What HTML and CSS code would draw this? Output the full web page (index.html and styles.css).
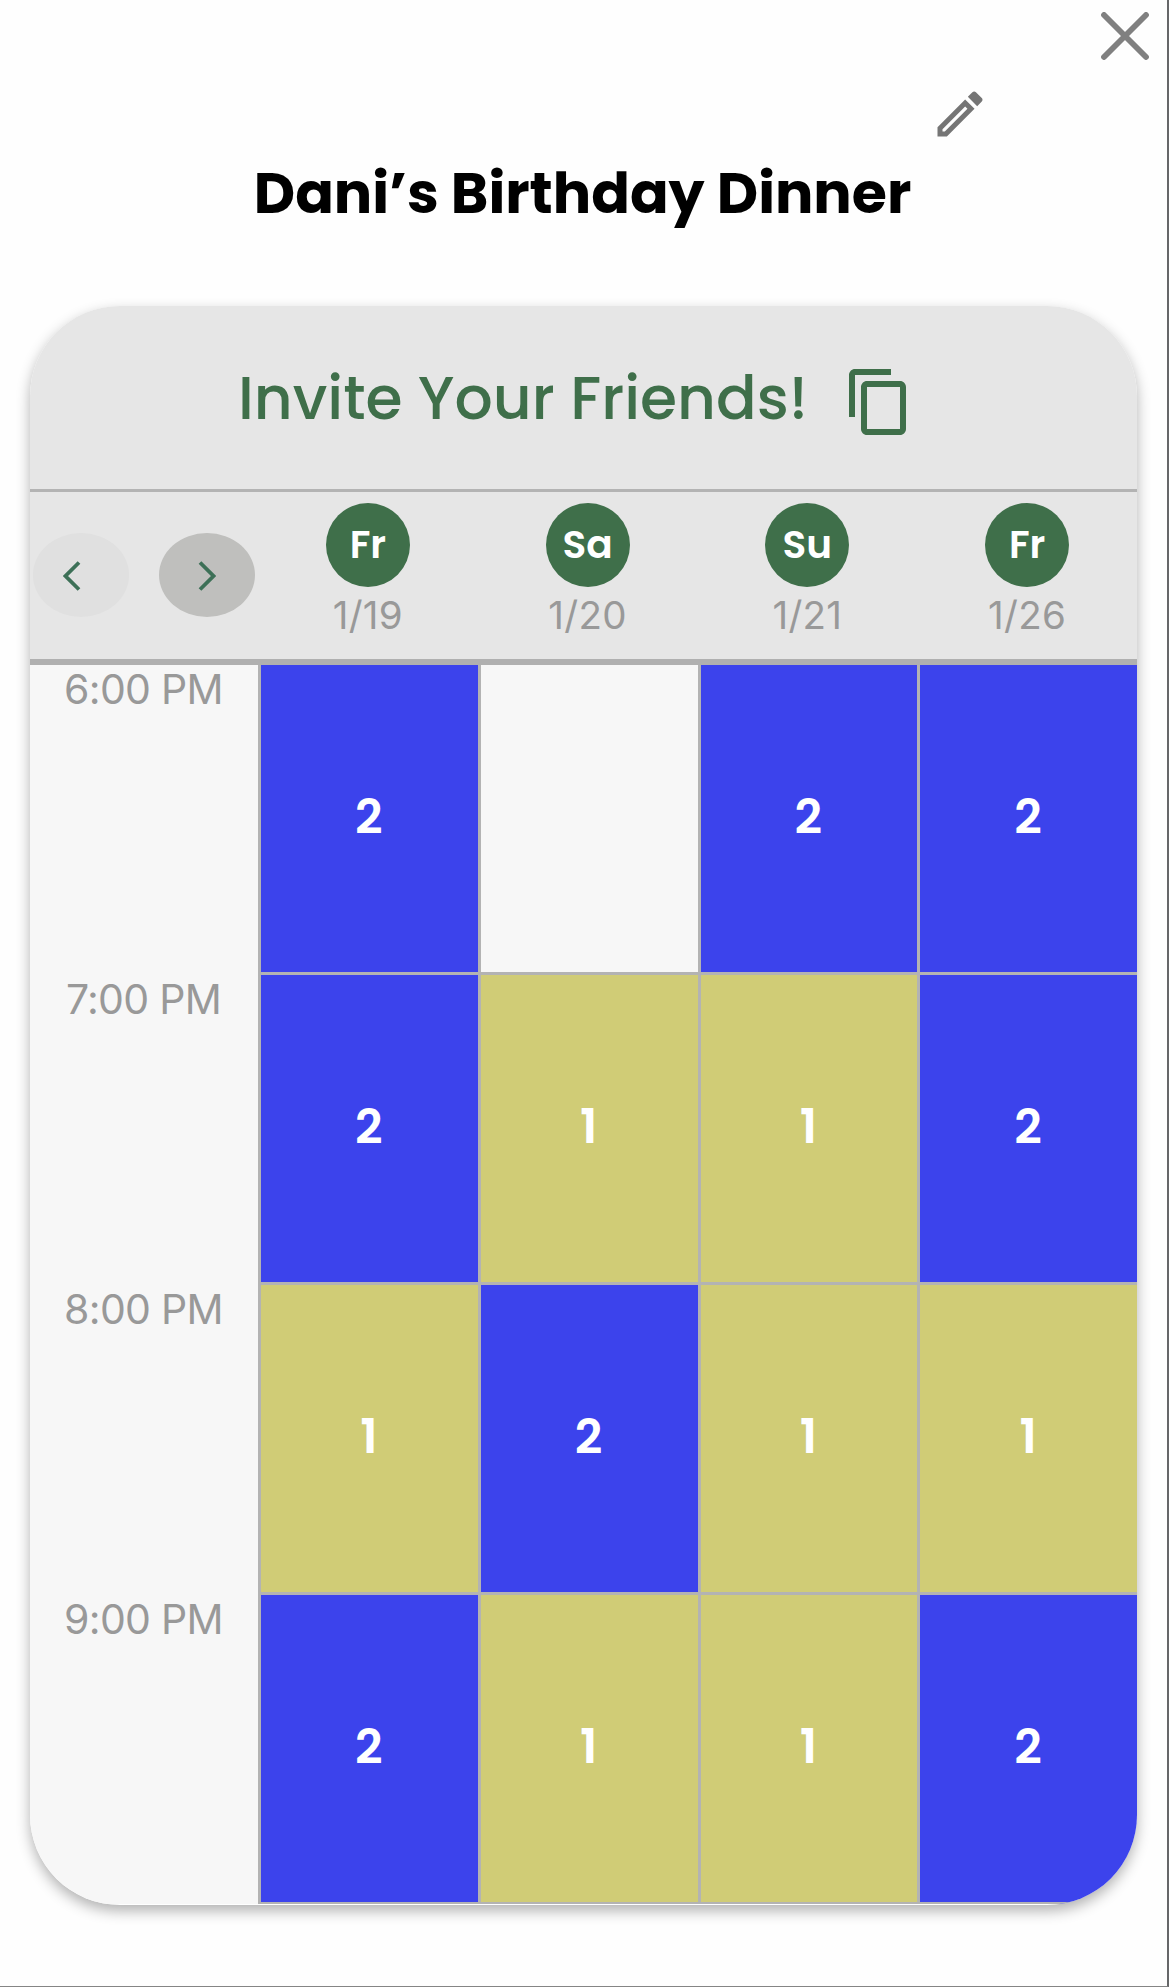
FILE: index.html
```html
<!DOCTYPE html>
<html lang="en">
<head>
<meta charset="utf-8">
<title>Dani’s Birthday Dinner</title>
<link rel="stylesheet" href="styles.css">
</head>
<body>
<main class="page">
  <div class="toolbar">
    <button class="icon-button close" aria-label="Close">
      <svg width="48" height="48" viewBox="0 0 48 48"><path d="M3 3L45 45M45 3L3 45" fill="none" stroke="#808080" stroke-width="5.8" stroke-linecap="round"/></svg>
    </button>
  </div>
  <div class="edit-row">
    <button class="icon-button" aria-label="Edit">
      <svg width="60" height="60" viewBox="0 0 24 24" fill="#757575"><path d="M14.06 9.02l.92.92L5.92 19H5v-.92l9.06-9.06M17.66 3c-.25 0-.51.1-.7.29l-1.83 1.83 3.75 3.75 1.83-1.83c.39-.39.39-1.02 0-1.41l-2.34-2.34c-.2-.2-.45-.29-.71-.29zm-3.6 3.19L3 17.25V21h3.75L17.81 9.94l-3.75-3.75z"/></svg>
    </button>
  </div>
  <h1 class="title">Dani’s Birthday Dinner</h1>

  <section class="card">
    <div class="invite">
      <span class="invite-text">Invite Your Friends!</span>
      <svg class="copy" width="72" height="72" viewBox="0 0 24 24" fill="#3f6f4a"><path d="M16 1H4c-1.1 0-2 .9-2 2v14h2V3h12V1zm3 4H8c-1.1 0-2 .9-2 2v14c0 1.1.9 2 2 2h11c1.1 0 2-.9 2-2V7c0-1.1-.9-2-2-2zm0 16H8V7h11v14z"/></svg>
    </div>
    <header class="days">
      <nav class="pager">
        <button class="page-button disabled" aria-label="Previous days"><svg class="prev" width="18" height="30" viewBox="0 0 18 30"><path d="M16 1.5L2.5 15L16 28.5"/></svg></button>
        <button class="page-button" aria-label="Next days"><svg class="next" width="18" height="30" viewBox="0 0 18 30"><path d="M2 1.5L15.5 15L2 28.5"/></svg></button>
      </nav>
      <div class="day"><span class="badge">Fr</span><span class="date">1/19</span></div>
      <div class="day"><span class="badge">Sa</span><span class="date">1/20</span></div>
      <div class="day"><span class="badge">Su</span><span class="date">1/21</span></div>
      <div class="day"><span class="badge">Fr</span><span class="date">1/26</span></div>
    </header>
    <div class="slots">
      <div class="time">6:00 PM</div><div class="slot two">2</div><div class="slot"></div><div class="slot two">2</div><div class="slot two">2</div>
      <div class="time">7:00 PM</div><div class="slot two">2</div><div class="slot one">1</div><div class="slot one">1</div><div class="slot two">2</div>
      <div class="time">8:00 PM</div><div class="slot one">1</div><div class="slot two">2</div><div class="slot one">1</div><div class="slot one">1</div>
      <div class="time">9:00 PM</div><div class="slot two">2</div><div class="slot one">1</div><div class="slot one">1</div><div class="slot two">2</div>
    </div>
  </section>
</main>
</body>
</html>
```
FILE: styles.css
```css
* { box-sizing: border-box; }
body { margin: 0; background: #fff; font-family: Poppins, Inter, "Liberation Sans", sans-serif; }
button { border: 0; padding: 0; background: none; font: inherit; }
svg { display: block; }
.page {
  width: 1169px;
  height: 1987px;
  background: #fefefe;
  border-right: 2px solid #666769;
  border-bottom: 1px solid #858585;
}
.toolbar { display: flex; justify-content: flex-end; height: 83px; padding: 12px 18px 0 0; }
.close { height: 48px; }
.edit-row { display: flex; padding-left: 930px; height: 62px; }
.title {
  margin: 0;
  height: 161px;
  padding: 13px 2px 0 0;
  font-size: 57px;
  line-height: 70px;
  font-weight: 700;
  text-align: center;
  white-space: nowrap;
}
.card {
  width: 1107px;
  height: 1599px;
  margin-left: 30px;
  overflow: hidden;
  border-radius: 90px;
  background: #fff;
  box-shadow: 0 6px 14px rgba(0, 0, 0, .3);
}
.invite {
  display: flex;
  align-items: center;
  height: 186px;
  padding-left: 208px;
  gap: 32px;
  background: #e6e6e6;
  border-bottom: 3px solid #b3b3b3;
  color: #3f6f4a;
}
.invite-text {
  width: 573px;
  font-size: 60px;
  line-height: 70px;
  font-weight: 500;
  white-space: nowrap;
}
.copy { margin-top: 8px; }
.days, .slots { display: grid; grid-template-columns: 228px repeat(4, 1fr); }
.days { height: 173px; background: #e6e6e6; border-bottom: 6px solid #b0b0b0; }
.pager { display: flex; gap: 30px; padding: 41px 0 0 3px; }
.page-button {
  display: flex;
  align-items: center;
  width: 96px;
  height: 84px;
  padding-top: 2px;
  border-radius: 50%;
  background: #bfbfbd;
}
.page-button.disabled { background: #e0e0e0; }
.page-button path { fill: none; stroke: #3d7057; stroke-width: 3.8; }
.prev { margin-left: 30px; }
.next { margin-left: 39px; }
.day { display: flex; flex-direction: column; align-items: center; padding-top: 11px; }
.badge {
  width: 84px;
  height: 84px;
  border-radius: 50%;
  background: #3f6f4a;
  color: #fff;
  font-size: 39px;
  line-height: 84px;
  font-weight: 600;
  text-align: center;
}
.date { margin-top: 5px; font: 400 38.5px/46px Inter, sans-serif; letter-spacing: .3px; color: #999; }
.slots { grid-template-rows: repeat(4, 310px); height: 1239px; overflow: hidden; }
.time {
  background: #f7f7f7;
  color: #999;
  font: 400 41px/48px Inter, sans-serif;
  letter-spacing: -.7px;
  text-align: center;
  padding-right: 1px;
}
.slot {
  display: flex;
  align-items: center;
  justify-content: center;
  border-left: 3px solid #b3b3b3;
  border-bottom: 3px solid #b3b3b3;
  background: #f7f7f7;
  color: #fff;
  font-size: 48px;
  font-weight: 600;
  padding: 0 1px 4px 0;
}
.two { background: #3c43ec; }
.one { background: #d0cc76; }
```
